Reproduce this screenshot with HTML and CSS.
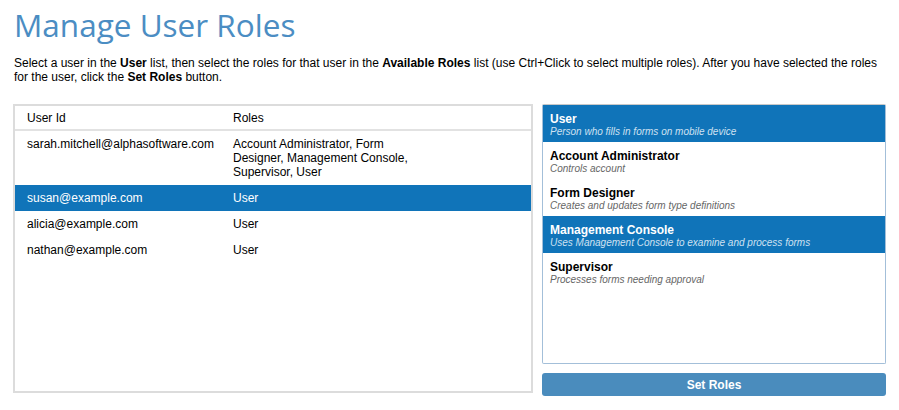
FILE: index.html
```html
<!DOCTYPE html>
<html>
<head>
<meta charset="utf-8">
<link rel="stylesheet" href="styles.css">
</head>
<body>
<div class="page">
  <h1 class="title">Manage User Roles</h1>
  <p class="intro">Select a user in the <b>User</b> list, then select the roles for that user in the <b>Available Roles</b> list (use Ctrl+Click to select multiple roles). After you have selected the roles for the user, click the <b>Set Roles</b> button.</p>
  <div class="main">
    <div class="users">
      <div class="row head">
        <div class="c1">User Id</div>
        <div class="c2">Roles</div>
      </div>
      <div class="row">
        <div class="c1">sarah.mitchell@alphasoftware.com</div>
        <div class="c2 wrap">Account Administrator, Form Designer, Management Console, Supervisor, User</div>
      </div>
      <div class="row sel">
        <div class="c1">susan@example.com</div>
        <div class="c2">User</div>
      </div>
      <div class="row">
        <div class="c1">alicia@example.com</div>
        <div class="c2">User</div>
      </div>
      <div class="row">
        <div class="c1">nathan@example.com</div>
        <div class="c2">User</div>
      </div>
    </div>
    <div class="side">
      <div class="roles">
        <div class="role sel">
          <div class="rname">User</div>
          <div class="rdesc">Person who fills in forms on mobile device</div>
        </div>
        <div class="role">
          <div class="rname">Account Administrator</div>
          <div class="rdesc">Controls account</div>
        </div>
        <div class="role">
          <div class="rname">Form Designer</div>
          <div class="rdesc">Creates and updates form type definitions</div>
        </div>
        <div class="role sel">
          <div class="rname">Management Console</div>
          <div class="rdesc">Uses Management Console to examine and process forms</div>
        </div>
        <div class="role">
          <div class="rname">Supervisor</div>
          <div class="rdesc">Processes forms needing approval</div>
        </div>
      </div>
      <button class="setbtn">Set Roles</button>
    </div>
  </div>
</div>
</body>
</html>
```

FILE: styles.css
```css
* { box-sizing: border-box; }
html, body { margin: 0; padding: 0; background: #fff; }
body { font-family: "Liberation Sans", Arial, sans-serif; font-size: 12px; color: #000; }
.page { padding: 0 13px 0 13px; }
.title {
  margin: 0;
  padding: 5px 0 0 1px;
  font-family: "Open Sans", "Noto Sans", sans-serif;
  font-weight: 400;
  font-size: 31.5px;
  line-height: 39px;
  color: #4b8dc3;
}
.intro {
  margin: 12px 0 0 1px;
  line-height: 14px;
  width: 870px;
}
.main {
  display: flex;
  gap: 9px;
  margin-top: 20px;
  height: 292px;
}
.users {
  width: 520px;
  height: 289px;
  border: 2px solid #dcdcdc;
  background: #fff;
}
.row {
  display: flex;
  padding: 6px 0;
  line-height: 14px;
}
.row .c1 { width: 218px; padding-left: 12px; flex: none; }
.row .c2 { flex: 1; }
.row .wrap { width: 180px; flex: none; }
.row.head { padding: 5px 0 5px; border-bottom: 2px solid #e2e2e2; height: 25px; }
.row.sel { background: #1074b9; color: #fff; }
.side {
  width: 344px;
  display: flex;
  flex-direction: column;
  gap: 9px;
}
.roles {
  flex: 1;
  border: 1px solid #a3bfd9;
  border-top-color: #c8c8c8;
  border-radius: 2px;
  background: #fff;
}
.role {
  height: 37px;
  padding: 7px 7px 0 7px;
}
.role .rname { font-weight: bold; font-size: 12px; line-height: 14px; }
.role .rdesc { font-style: italic; font-size: 10px; line-height: 12px; color: #666; }
.role.sel { background: #1074b9; color: #fff; }
.role.sel .rdesc { color: #cfe1f1; }
.setbtn {
  height: 23px;
  border: none;
  border-radius: 3px;
  background: #4a8cbd;
  color: #fff;
  font-family: "Liberation Sans", Arial, sans-serif;
  font-weight: bold;
  font-size: 12px;
  padding: 0;
}
```
